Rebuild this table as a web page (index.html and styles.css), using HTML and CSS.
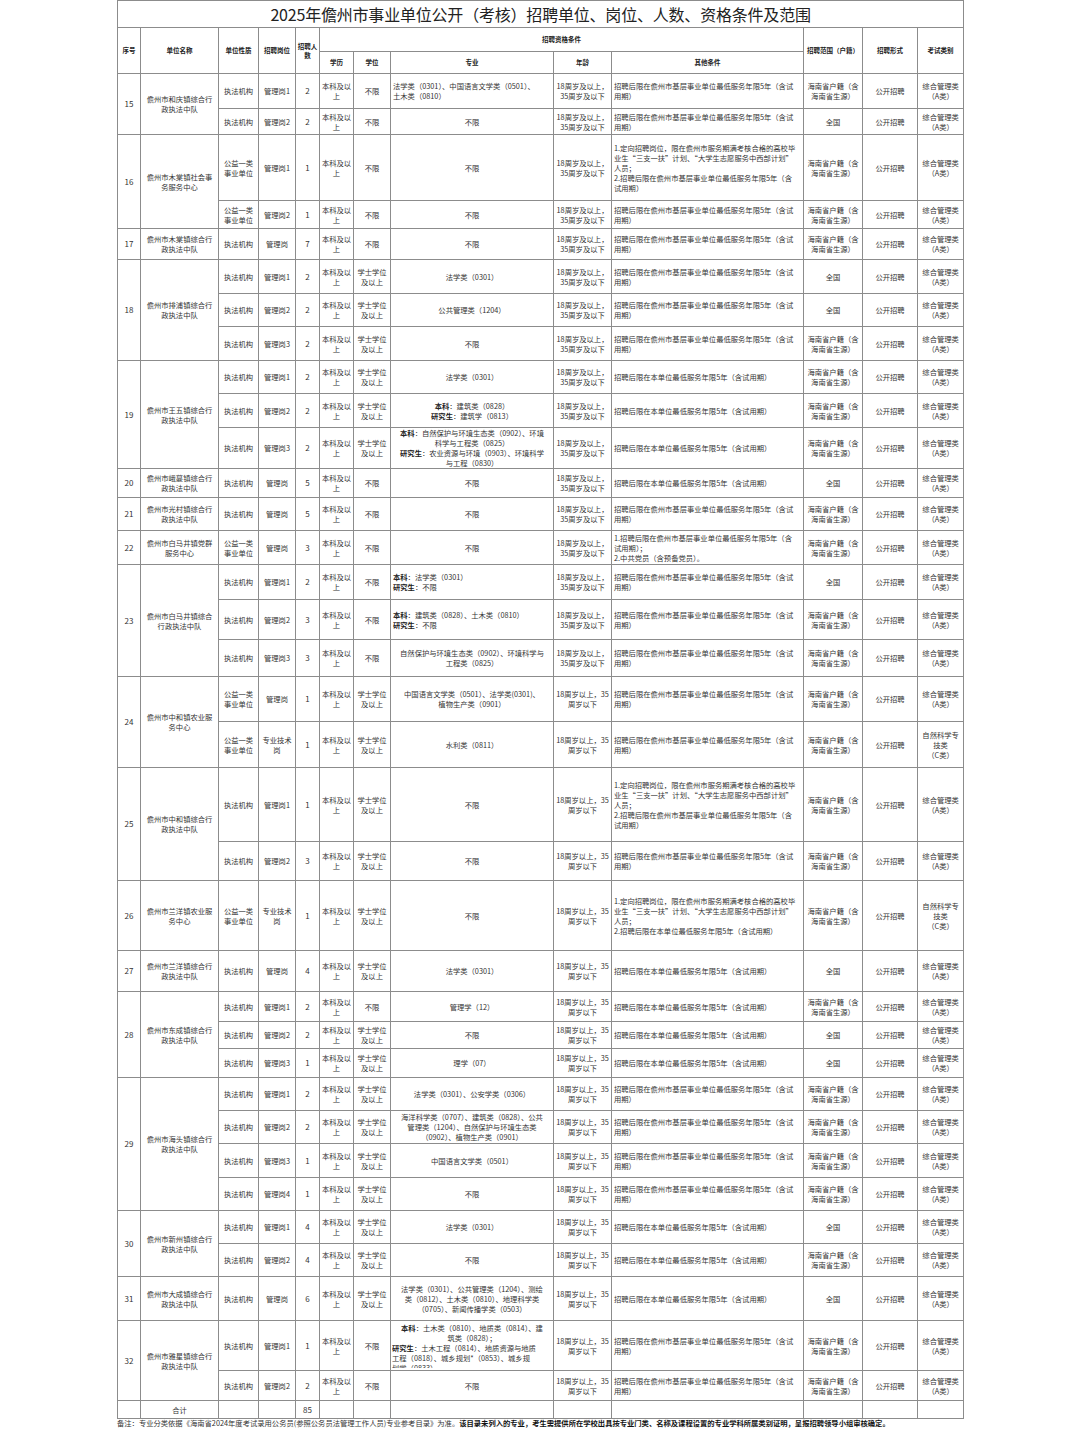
FILE: index.html
```html
<!DOCTYPE html>
<html lang="zh-CN">
<head>
<meta charset="utf-8">
<title>2025年儋州市事业单位公开（考核）招聘</title>
<link rel="stylesheet" href="styles.css">
</head>
<body>
<div class="page">
<table class="grid">
<colgroup>
<col class="w23"><col class="w78"><col class="w40"><col class="w37"><col class="w24"><col class="w34"><col class="w37"><col class="w163"><col class="w58"><col class="w192"><col class="w59"><col class="w55"><col class="w46">
</colgroup>
<tr class="h27"><td colspan="13" class="title">2025年儋州市事业单位公开（考核）招聘单位、岗位、人数、资格条件及范围</td></tr>
<tr class="h24 head">
<td rowspan="2">序号</td><td rowspan="2">单位名称</td><td rowspan="2">单位性质</td><td rowspan="2">招聘岗位</td><td rowspan="2">招聘人<br>数</td>
<td colspan="5">招聘资格条件</td>
<td rowspan="2">招聘范围（户籍）</td><td rowspan="2">招聘形式</td><td rowspan="2">考试类别</td>
</tr>
<tr class="h22 head"><td>学历</td><td>学位</td><td>专业</td><td>年龄</td><td>其他条件</td></tr>

<!-- 15 -->
<tr class="h35"><td rowspan="2" class="num">15</td><td rowspan="2">儋州市和庆镇综合行<br>政执法中队</td>
<td>执法机构</td><td>管理岗1</td><td class="num">2</td><td>本科及以<br>上</td><td>不限</td><td class="l">法学类（0301）、中国语言文学类（0501）、<br>土木类（0810）</td><td>18周岁及以上，<br>35周岁及以下</td><td class="l">招聘后限在儋州市基层事业单位最低服务年限5年（含试<br>用期）</td><td>海南省户籍（含<br>海南省生源）</td><td>公开招聘</td><td>综合管理类<br>（A类）</td></tr>
<tr class="h26"><td>执法机构</td><td>管理岗2</td><td class="num">2</td><td>本科及以<br>上</td><td>不限</td><td>不限</td><td>18周岁及以上，<br>35周岁及以下</td><td class="l">招聘后限在儋州市基层事业单位最低服务年限5年（含试<br>用期）</td><td>全国</td><td>公开招聘</td><td>综合管理类<br>（A类）</td></tr>

<!-- 16 -->
<tr class="h66"><td rowspan="2" class="num">16</td><td rowspan="2">儋州市木棠镇社会事<br>务服务中心</td>
<td>公益一类<br>事业单位</td><td>管理岗1</td><td class="num">1</td><td>本科及以<br>上</td><td>不限</td><td>不限</td><td>18周岁及以上，<br>35周岁及以下</td><td class="l">1.定向招聘岗位，限在儋州市服务期满考核合格的高校毕<br>业生“三支一扶”计划、“大学生志愿服务中西部计划”<br>人员；<br>2.招聘后限在儋州市基层事业单位最低服务年限5年（含<br>试用期）</td><td>海南省户籍（含<br>海南省生源）</td><td>公开招聘</td><td>综合管理类<br>（A类）</td></tr>
<tr class="h28"><td>公益一类<br>事业单位</td><td>管理岗2</td><td class="num">1</td><td>本科及以<br>上</td><td>不限</td><td>不限</td><td>18周岁及以上，<br>35周岁及以下</td><td class="l">招聘后限在儋州市基层事业单位最低服务年限5年（含试<br>用期）</td><td>海南省户籍（含<br>海南省生源）</td><td>公开招聘</td><td>综合管理类<br>（A类）</td></tr>

<!-- 17 -->
<tr class="h31"><td class="num">17</td><td>儋州市木棠镇综合行<br>政执法中队</td>
<td>执法机构</td><td>管理岗</td><td class="num">7</td><td>本科及以<br>上</td><td>不限</td><td>不限</td><td>18周岁及以上，<br>35周岁及以下</td><td class="l">招聘后限在儋州市基层事业单位最低服务年限5年（含试<br>用期）</td><td>海南省户籍（含<br>海南省生源）</td><td>公开招聘</td><td>综合管理类<br>（A类）</td></tr>

<!-- 18 -->
<tr class="h34"><td rowspan="3" class="num">18</td><td rowspan="3">儋州市排浦镇综合行<br>政执法中队</td>
<td>执法机构</td><td>管理岗1</td><td class="num">2</td><td>本科及以<br>上</td><td>学士学位<br>及以上</td><td>法学类（0301）</td><td>18周岁及以上，<br>35周岁及以下</td><td class="l">招聘后限在儋州市基层事业单位最低服务年限5年（含试<br>用期）</td><td>全国</td><td>公开招聘</td><td>综合管理类<br>（A类）</td></tr>
<tr class="h33"><td>执法机构</td><td>管理岗2</td><td class="num">2</td><td>本科及以<br>上</td><td>学士学位<br>及以上</td><td>公共管理类（1204）</td><td>18周岁及以上，<br>35周岁及以下</td><td class="l">招聘后限在儋州市基层事业单位最低服务年限5年（含试<br>用期）</td><td>全国</td><td>公开招聘</td><td>综合管理类<br>（A类）</td></tr>
<tr class="h34"><td>执法机构</td><td>管理岗3</td><td class="num">2</td><td>本科及以<br>上</td><td>学士学位<br>及以上</td><td>不限</td><td>18周岁及以上，<br>35周岁及以下</td><td class="l">招聘后限在儋州市基层事业单位最低服务年限5年（含试<br>用期）</td><td>海南省户籍（含<br>海南省生源）</td><td>公开招聘</td><td>综合管理类<br>（A类）</td></tr>

<!-- 19 -->
<tr class="h33"><td rowspan="3" class="num">19</td><td rowspan="3">儋州市王五镇综合行<br>政执法中队</td>
<td>执法机构</td><td>管理岗1</td><td class="num">2</td><td>本科及以<br>上</td><td>学士学位<br>及以上</td><td>法学类（0301）</td><td>18周岁及以上，<br>35周岁及以下</td><td class="l">招聘后限在本单位最低服务年限5年（含试用期）</td><td>海南省户籍（含<br>海南省生源）</td><td>公开招聘</td><td>综合管理类<br>（A类）</td></tr>
<tr class="h34"><td>执法机构</td><td>管理岗2</td><td class="num">2</td><td>本科及以<br>上</td><td>学士学位<br>及以上</td><td><b>本科</b>：建筑类（0828）<br><b>研究生</b>：建筑学（0813）</td><td>18周岁及以上，<br>35周岁及以下</td><td class="l">招聘后限在本单位最低服务年限5年（含试用期）</td><td>海南省户籍（含<br>海南省生源）</td><td>公开招聘</td><td>综合管理类<br>（A类）</td></tr>
<tr class="h41"><td>执法机构</td><td>管理岗3</td><td class="num">2</td><td>本科及以<br>上</td><td>学士学位<br>及以上</td><td><b>本科</b>：自然保护与环境生态类（0902）、环境<br>科学与工程类（0825）<br><b>研究生</b>：农业资源与环境（0903）、环境科学<br>与工程（0830）</td><td>18周岁及以上，<br>35周岁及以下</td><td class="l">招聘后限在本单位最低服务年限5年（含试用期）</td><td>海南省户籍（含<br>海南省生源）</td><td>公开招聘</td><td>综合管理类<br>（A类）</td></tr>

<!-- 20 -->
<tr class="h29"><td class="num">20</td><td>儋州市峨蔓镇综合行<br>政执法中队</td>
<td>执法机构</td><td>管理岗</td><td class="num">5</td><td>本科及以<br>上</td><td>不限</td><td>不限</td><td>18周岁及以上，<br>35周岁及以下</td><td class="l">招聘后限在本单位最低服务年限5年（含试用期）</td><td>全国</td><td>公开招聘</td><td>综合管理类<br>（A类）</td></tr>

<!-- 21 -->
<tr class="h33"><td class="num">21</td><td>儋州市光村镇综合行<br>政执法中队</td>
<td>执法机构</td><td>管理岗</td><td class="num">5</td><td>本科及以<br>上</td><td>不限</td><td>不限</td><td>18周岁及以上，<br>35周岁及以下</td><td class="l">招聘后限在儋州市基层事业单位最低服务年限5年（含试<br>用期）</td><td>海南省户籍（含<br>海南省生源）</td><td>公开招聘</td><td>综合管理类<br>（A类）</td></tr>

<!-- 22 -->
<tr class="h34"><td class="num">22</td><td>儋州市白马井镇党群<br>服务中心</td>
<td>公益一类<br>事业单位</td><td>管理岗</td><td class="num">3</td><td>本科及以<br>上</td><td>不限</td><td>不限</td><td>18周岁及以上，<br>35周岁及以下</td><td class="l">1.招聘后限在儋州市基层事业单位最低服务年限5年（含<br>试用期）；<br>2.中共党员（含预备党员）。</td><td>海南省户籍（含<br>海南省生源）</td><td>公开招聘</td><td>综合管理类<br>（A类）</td></tr>

<!-- 23 -->
<tr class="h35"><td rowspan="3" class="num">23</td><td rowspan="3">儋州市白马井镇综合<br>行政执法中队</td>
<td>执法机构</td><td>管理岗1</td><td class="num">2</td><td>本科及以<br>上</td><td>不限</td><td class="l"><b>本科</b>：法学类（0301）<br><b>研究生</b>：不限</td><td>18周岁及以上，<br>35周岁及以下</td><td class="l">招聘后限在儋州市基层事业单位最低服务年限5年（含试<br>用期）</td><td>全国</td><td>公开招聘</td><td>综合管理类<br>（A类）</td></tr>
<tr class="h40"><td>执法机构</td><td>管理岗2</td><td class="num">3</td><td>本科及以<br>上</td><td>不限</td><td class="l"><b>本科</b>：建筑类（0828）、土木类（0810）<br><b>研究生</b>：不限</td><td>18周岁及以上，<br>35周岁及以下</td><td class="l">招聘后限在儋州市基层事业单位最低服务年限5年（含试<br>用期）</td><td>海南省户籍（含<br>海南省生源）</td><td>公开招聘</td><td>综合管理类<br>（A类）</td></tr>
<tr class="h37"><td>执法机构</td><td>管理岗3</td><td class="num">3</td><td>本科及以<br>上</td><td>不限</td><td>自然保护与环境生态类（0902）、环境科学与<br>工程类（0825）</td><td>18周岁及以上，<br>35周岁及以下</td><td class="l">招聘后限在儋州市基层事业单位最低服务年限5年（含试<br>用期）</td><td>海南省户籍（含<br>海南省生源）</td><td>公开招聘</td><td>综合管理类<br>（A类）</td></tr>

<!-- 24 -->
<tr class="h45"><td rowspan="2" class="num">24</td><td rowspan="2">儋州市中和镇农业服<br>务中心</td>
<td>公益一类<br>事业单位</td><td>管理岗</td><td class="num">1</td><td>本科及以<br>上</td><td>学士学位<br>及以上</td><td>中国语言文学类（0501）、法学类(0301)、<br>植物生产类（0901）</td><td>18周岁以上，35<br>周岁以下</td><td class="l">招聘后限在儋州市基层事业单位最低服务年限5年（含试<br>用期）</td><td>海南省户籍（含<br>海南省生源）</td><td>公开招聘</td><td>综合管理类<br>（A类）</td></tr>
<tr class="h46"><td>公益一类<br>事业单位</td><td>专业技术<br>岗</td><td class="num">1</td><td>本科及以<br>上</td><td>学士学位<br>及以上</td><td>水利类（0811）</td><td>18周岁以上，35<br>周岁以下</td><td class="l">招聘后限在儋州市基层事业单位最低服务年限5年（含试<br>用期）</td><td>海南省户籍（含<br>海南省生源）</td><td>公开招聘</td><td>自然科学专<br>技类<br>（C类）</td></tr>

<!-- 25 -->
<tr class="h74"><td rowspan="2" class="num">25</td><td rowspan="2">儋州市中和镇综合行<br>政执法中队</td>
<td>执法机构</td><td>管理岗1</td><td class="num">1</td><td>本科及以<br>上</td><td>学士学位<br>及以上</td><td>不限</td><td>18周岁以上，35<br>周岁以下</td><td class="l">1.定向招聘岗位，限在儋州市服务期满考核合格的高校毕<br>业生“三支一扶”计划、“大学生志愿服务中西部计划”<br>人员；<br>2.招聘后限在儋州市基层事业单位最低服务年限5年（含<br>试用期）</td><td>海南省户籍（含<br>海南省生源）</td><td>公开招聘</td><td>综合管理类<br>（A类）</td></tr>
<tr class="h39"><td>执法机构</td><td>管理岗2</td><td class="num">3</td><td>本科及以<br>上</td><td>学士学位<br>及以上</td><td>不限</td><td>18周岁以上，35<br>周岁以下</td><td class="l">招聘后限在儋州市基层事业单位最低服务年限5年（含试<br>用期）</td><td>海南省户籍（含<br>海南省生源）</td><td>公开招聘</td><td>综合管理类<br>（A类）</td></tr>

<!-- 26 -->
<tr class="h70"><td class="num">26</td><td>儋州市兰洋镇农业服<br>务中心</td>
<td>公益一类<br>事业单位</td><td>专业技术<br>岗</td><td class="num">1</td><td>本科及以<br>上</td><td>学士学位<br>及以上</td><td>不限</td><td>18周岁以上，35<br>周岁以下</td><td class="l">1.定向招聘岗位，限在儋州市服务期满考核合格的高校毕<br>业生“三支一扶”计划、“大学生志愿服务中西部计划”<br>人员；<br>2.招聘后限在本单位最低服务年限5年（含试用期）</td><td>海南省户籍（含<br>海南省生源）</td><td>公开招聘</td><td>自然科学专<br>技类<br>（C类）</td></tr>

<!-- 27 -->
<tr class="h41"><td class="num">27</td><td>儋州市兰洋镇综合行<br>政执法中队</td>
<td>执法机构</td><td>管理岗</td><td class="num">4</td><td>本科及以<br>上</td><td>学士学位<br>及以上</td><td>法学类（0301）</td><td>18周岁以上，35<br>周岁以下</td><td class="l">招聘后限在本单位最低服务年限5年（含试用期）</td><td>全国</td><td>公开招聘</td><td>综合管理类<br>（A类）</td></tr>

<!-- 28 -->
<tr class="h30"><td rowspan="3" class="num">28</td><td rowspan="3">儋州市东成镇综合行<br>政执法中队</td>
<td>执法机构</td><td>管理岗1</td><td class="num">2</td><td>本科及以<br>上</td><td>不限</td><td>管理学（12）</td><td>18周岁以上，35<br>周岁以下</td><td class="l">招聘后限在本单位最低服务年限5年（含试用期）</td><td>海南省户籍（含<br>海南省生源）</td><td>公开招聘</td><td>综合管理类<br>（A类）</td></tr>
<tr class="h27"><td>执法机构</td><td>管理岗2</td><td class="num">2</td><td>本科及以<br>上</td><td>学士学位<br>及以上</td><td>不限</td><td>18周岁以上，35<br>周岁以下</td><td class="l">招聘后限在本单位最低服务年限5年（含试用期）</td><td>全国</td><td>公开招聘</td><td>综合管理类<br>（A类）</td></tr>
<tr class="h29"><td>执法机构</td><td>管理岗3</td><td class="num">1</td><td>本科及以<br>上</td><td>学士学位<br>及以上</td><td>理学（07）</td><td>18周岁以上，35<br>周岁以下</td><td class="l">招聘后限在本单位最低服务年限5年（含试用期）</td><td>全国</td><td>公开招聘</td><td>综合管理类<br>（A类）</td></tr>

<!-- 29 -->
<tr class="h33"><td rowspan="4" class="num">29</td><td rowspan="4">儋州市海头镇综合行<br>政执法中队</td>
<td>执法机构</td><td>管理岗1</td><td class="num">2</td><td>本科及以<br>上</td><td>学士学位<br>及以上</td><td>法学类（0301）、公安学类（0306）</td><td>18周岁以上，35<br>周岁以下</td><td class="l">招聘后限在儋州市基层事业单位最低服务年限5年（含试<br>用期）</td><td>海南省户籍（含<br>海南省生源）</td><td>公开招聘</td><td>综合管理类<br>（A类）</td></tr>
<tr class="h33"><td>执法机构</td><td>管理岗2</td><td class="num">2</td><td>本科及以<br>上</td><td>学士学位<br>及以上</td><td>海洋科学类（0707）、建筑类（0828）、公共<br>管理类（1204）、自然保护与环境生态类<br>（0902）、植物生产类（0901）</td><td>18周岁以上，35<br>周岁以下</td><td class="l">招聘后限在儋州市基层事业单位最低服务年限5年（含试<br>用期）</td><td>海南省户籍（含<br>海南省生源）</td><td>公开招聘</td><td>综合管理类<br>（A类）</td></tr>
<tr class="h34"><td>执法机构</td><td>管理岗3</td><td class="num">1</td><td>本科及以<br>上</td><td>学士学位<br>及以上</td><td>中国语言文学类（0501）</td><td>18周岁以上，35<br>周岁以下</td><td class="l">招聘后限在儋州市基层事业单位最低服务年限5年（含试<br>用期）</td><td>海南省户籍（含<br>海南省生源）</td><td>公开招聘</td><td>综合管理类<br>（A类）</td></tr>
<tr class="h33"><td>执法机构</td><td>管理岗4</td><td class="num">1</td><td>本科及以<br>上</td><td>学士学位<br>及以上</td><td>不限</td><td>18周岁以上，35<br>周岁以下</td><td class="l">招聘后限在儋州市基层事业单位最低服务年限5年（含试<br>用期）</td><td>海南省户籍（含<br>海南省生源）</td><td>公开招聘</td><td>综合管理类<br>（A类）</td></tr>

<!-- 30 -->
<tr class="h33"><td rowspan="2" class="num">30</td><td rowspan="2">儋州市新州镇综合行<br>政执法中队</td>
<td>执法机构</td><td>管理岗1</td><td class="num">4</td><td>本科及以<br>上</td><td>学士学位<br>及以上</td><td>法学类（0301）</td><td>18周岁以上，35<br>周岁以下</td><td class="l">招聘后限在本单位最低服务年限5年（含试用期）</td><td>全国</td><td>公开招聘</td><td>综合管理类<br>（A类）</td></tr>
<tr class="h33"><td>执法机构</td><td>管理岗2</td><td class="num">4</td><td>本科及以<br>上</td><td>学士学位<br>及以上</td><td>不限</td><td>18周岁以上，35<br>周岁以下</td><td class="l">招聘后限在本单位最低服务年限5年（含试用期）</td><td>海南省户籍（含<br>海南省生源）</td><td>公开招聘</td><td>综合管理类<br>（A类）</td></tr>

<!-- 31 -->
<tr class="h44"><td class="num">31</td><td>儋州市大成镇综合行<br>政执法中队</td>
<td>执法机构</td><td>管理岗</td><td class="num">6</td><td>本科及以<br>上</td><td>学士学位<br>及以上</td><td>法学类（0301）、公共管理类（1204）、测绘<br>类（0812）、土木类（0810）、地理科学类<br>（0705）、新闻传播学类（0503）</td><td>18周岁以上，35<br>周岁以下</td><td class="l">招聘后限在本单位最低服务年限5年（含试用期）</td><td>全国</td><td>公开招聘</td><td>综合管理类<br>（A类）</td></tr>

<!-- 32 -->
<tr class="h50"><td rowspan="2" class="num">32</td><td rowspan="2">儋州市雅星镇综合行<br>政执法中队</td>
<td>执法机构</td><td>管理岗1</td><td class="num">1</td><td>本科及以<br>上</td><td>不限</td><td><div class="clip"><b>本科</b>：土木类（0810）、地质类（0814）、建<br>筑类（0828）；<br><span class="lft"><b>研究生</b>：土木工程（0814）、地质资源与地质<br>工程（0818）、城乡规划*（0853）、城乡规<br>划学（0833）</span></div></td><td>18周岁以上，35<br>周岁以下</td><td class="l">招聘后限在儋州市基层事业单位最低服务年限5年（含试<br>用期）</td><td>海南省户籍（含<br>海南省生源）</td><td>公开招聘</td><td>综合管理类<br>（A类）</td></tr>
<tr class="h30"><td>执法机构</td><td>管理岗2</td><td class="num">2</td><td>本科及以<br>上</td><td>不限</td><td>不限</td><td>18周岁以上，35<br>周岁以下</td><td class="l">招聘后限在儋州市基层事业单位最低服务年限5年（含试<br>用期）</td><td>海南省户籍（含<br>海南省生源）</td><td>公开招聘</td><td>综合管理类<br>（A类）</td></tr>

<tr class="h18"><td></td><td>合计</td><td></td><td></td><td class="num">85</td><td></td><td></td><td></td><td></td><td></td><td></td><td></td><td></td></tr>
</table>
<p class="note">备注：专业分类依据《海南省2024年度考试录用公务员(参照公务员法管理工作人员)专业参考目录》为准。<b>该目录未列入的专业，考生需提供所在学校出具按专业门类、名称及课程设置的专业学科所属类别证明，呈报招聘领导小组审核确定。</b></p>
</div>
</body>
</html>
```

FILE: styles.css
```css
html, body {
  margin: 0;
  padding: 0;
  background: #ffffff;
}

.page {
  width: 846px;
  margin: 0 0 0 117px;
  font-family: "Noto Sans CJK SC", "Noto Sans", "Liberation Sans", sans-serif;
  color: #333333;
}

.grid {
  width: 846px;
  table-layout: fixed;
  border-collapse: collapse;
  font-size: 7.3px;
  line-height: 10px;
}

.grid td {
  border: 1px solid #8c8c8c;
  padding: 0 1px;
  text-align: center;
  vertical-align: middle;
  white-space: nowrap;
  overflow: hidden;
}

.grid td.l {
  text-align: left;
  padding-left: 2px;
}

.grid td.num {
  font-size: 8px;
}

.grid b {
  font-weight: 700;
  color: #222222;
}

.w23 { width: 23px; }
.w78 { width: 78px; }
.w40 { width: 40px; }
.w37 { width: 37px; }
.w24 { width: 24px; }
.w34 { width: 34px; }
.w163 { width: 163px; }
.w58 { width: 58px; }
.w192 { width: 192px; }
.w59 { width: 59px; }
.w55 { width: 55px; }
.w46 { width: 46px; }

.grid td.title {
  font-size: 16px;
  line-height: 20px;
  color: #222222;
  letter-spacing: -0.2px;
}

.head td {
  font-weight: 700;
  font-size: 6.5px;
  line-height: 9px;
  color: #222222;
}

.clip {
  height: 45px;
  overflow: hidden;
  text-align: center;
}

.clip .lft {
  display: block;
  text-align: left;
}

.note {
  margin: 0;
  font-size: 7.3px;
  line-height: 9px;
  color: #333333;
  white-space: nowrap;
}

.note b {
  color: #111111;
}

.h18 { height: 18px; }
.h22 { height: 22px; }
.h24 { height: 24px; }
.h26 { height: 26px; }
.h27 { height: 27px; }
.h28 { height: 28px; }
.h29 { height: 29px; }
.h30 { height: 30px; }
.h31 { height: 31px; }
.h33 { height: 33px; }
.h34 { height: 34px; }
.h35 { height: 35px; }
.h37 { height: 37px; }
.h39 { height: 39px; }
.h40 { height: 40px; }
.h41 { height: 41px; }
.h44 { height: 44px; }
.h45 { height: 45px; }
.h46 { height: 46px; }
.h50 { height: 50px; }
.h66 { height: 66px; }
.h70 { height: 70px; }
.h74 { height: 74px; }
```
